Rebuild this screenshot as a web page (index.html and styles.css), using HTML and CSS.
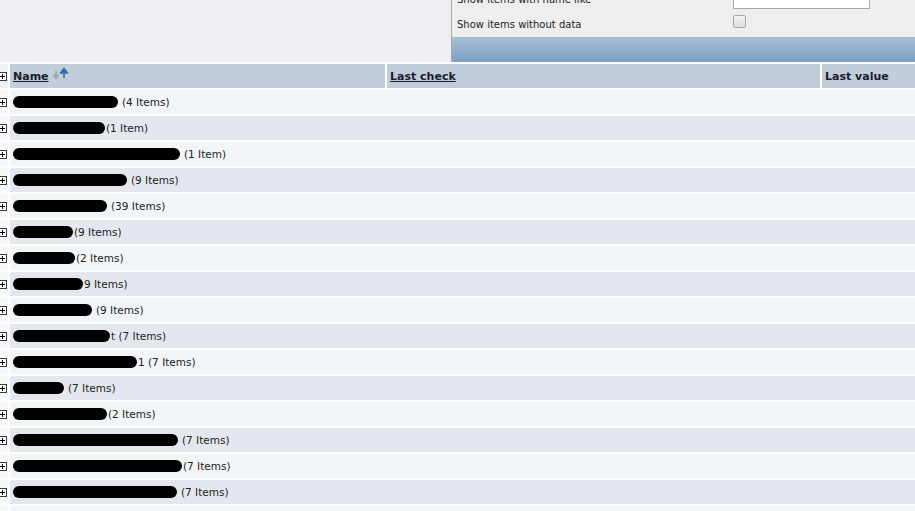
FILE: index.html
```html
<!DOCTYPE html>
<html>
<head>
<meta charset="utf-8">
<link rel="stylesheet" href="styles.css">
</head>
<body>
<div class="top">
  <div class="top-spacer"></div>
  <div class="filter">
    <div class="filter-rows">
      <div class="frow"><span class="flabel">Show items with name like</span><span class="finput"></span></div>
      <div class="frow"><span class="flabel">Show items without data</span><span class="fcheck"></span></div>
    </div>
    <div class="fbar"></div>
  </div>
</div>
<div class="grid">
  <div class="hrow">
    <div class="c0"><span class="plus"></span></div>
    <div class="hcell hname"><a class="hlink">Name</a>
      <svg class="sort" width="18" height="13" viewBox="0 0 18 13"><path d="M4 4 V10 M1.5 7.5 L4 11 L6.5 7.5" stroke="#a8a8a8" stroke-width="2" fill="none"/><path d="M12 11 V4 M8.5 6 L12 1.5 L15.5 6 Z" stroke="#3a6ea5" stroke-width="1.6" fill="#3a6ea5" stroke-linejoin="round"/></svg>
    </div>
    <div class="hcell hcheck"><a class="hlink">Last check</a></div>
    <div class="hcell hvalue">Last value</div>
  </div>
  <div class="row odd"><div class="c0"><span class="plus"></span></div><div class="cell"><span class="blot" style="width:105px"></span><span class="cnt">(4 Items)</span></div></div>
  <div class="row even"><div class="c0"><span class="plus"></span></div><div class="cell"><span class="blot" style="width:92px"></span><span class="cnt tight">(1 Item)</span></div></div>
  <div class="row odd"><div class="c0"><span class="plus"></span></div><div class="cell"><span class="blot" style="width:167px"></span><span class="cnt">(1 Item)</span></div></div>
  <div class="row even"><div class="c0"><span class="plus"></span></div><div class="cell"><span class="blot" style="width:114px"></span><span class="cnt">(9 Items)</span></div></div>
  <div class="row odd"><div class="c0"><span class="plus"></span></div><div class="cell"><span class="blot" style="width:94px"></span><span class="cnt">(39 Items)</span></div></div>
  <div class="row even"><div class="c0"><span class="plus"></span></div><div class="cell"><span class="blot" style="width:60px"></span><span class="cnt tight">(9 Items)</span></div></div>
  <div class="row odd"><div class="c0"><span class="plus"></span></div><div class="cell"><span class="blot" style="width:62px"></span><span class="cnt tight">(2 Items)</span></div></div>
  <div class="row even"><div class="c0"><span class="plus"></span></div><div class="cell"><span class="blot" style="width:70px"></span><span class="cnt tight">9 Items)</span></div></div>
  <div class="row odd"><div class="c0"><span class="plus"></span></div><div class="cell"><span class="blot" style="width:79px"></span><span class="cnt">(9 Items)</span></div></div>
  <div class="row even"><div class="c0"><span class="plus"></span></div><div class="cell"><span class="blot" style="width:97px"></span><span class="cnt tight">t (7 Items)</span></div></div>
  <div class="row odd"><div class="c0"><span class="plus"></span></div><div class="cell"><span class="blot" style="width:124px"></span><span class="cnt tight">1 (7 Items)</span></div></div>
  <div class="row even"><div class="c0"><span class="plus"></span></div><div class="cell"><span class="blot" style="width:51px"></span><span class="cnt">(7 Items)</span></div></div>
  <div class="row odd"><div class="c0"><span class="plus"></span></div><div class="cell"><span class="blot" style="width:94px"></span><span class="cnt tight">(2 Items)</span></div></div>
  <div class="row even"><div class="c0"><span class="plus"></span></div><div class="cell"><span class="blot" style="width:165px"></span><span class="cnt">(7 Items)</span></div></div>
  <div class="row odd"><div class="c0"><span class="plus"></span></div><div class="cell"><span class="blot" style="width:169px"></span><span class="cnt tight">(7 Items)</span></div></div>
  <div class="row even"><div class="c0"><span class="plus"></span></div><div class="cell"><span class="blot" style="width:164px"></span><span class="cnt">(7 Items)</span></div></div>
  <div class="row odd"><div class="c0"><span class="plus"></span></div><div class="cell"></div></div>
</div>
</body>
</html>
```

FILE: styles.css
```css
html, body {
  margin: 0;
  padding: 0;
  background: #ffffff;
  overflow: hidden;
  width: 915px;
  height: 511px;
  font-family: "DejaVu Sans", Verdana, sans-serif;
  color: #1f1f1f;
}

.top {
  display: flex;
  height: 62px;
  background: #eceef1;
  overflow: hidden;
}

.top-spacer {
  width: 451px;
  flex: none;
}

.filter {
  flex: 1;
  display: flex;
  flex-direction: column;
  background: #eeeeee;
  border-left: 1px solid #a9a9a9;
}

.filter-rows {
  margin-top: -13px;
  flex: 1;
  display: flex;
  flex-direction: column;
}

.frow {
  display: flex;
  align-items: center;
  height: 25px;
  padding-left: 5px;
  font-size: 10px;
  color: #222;
}

.flabel {
  width: 276px;
}

.finput {
  width: 137px;
  height: 20px;
  box-sizing: border-box;
  background: #fff;
  border: 1px solid #a6a6a6;
  margin-top: -1px;
}

.fcheck {
  width: 11px;
  height: 11px;
  border: 1px solid #a8a8a8;
  border-radius: 2px;
  background: linear-gradient(#f4f4f4, #dcdcdc);
  margin-top: -6px;
}

.fbar {
  height: 25px;
  flex: none;
  background: linear-gradient(#a9bfd6, #7aa1c6);
}

.grid {
  margin-left: -2px;
  padding-top: 2px;
  display: flex;
  flex-direction: column;
  gap: 2px;
}

.hrow, .row {
  display: flex;
  gap: 2px;
  height: 24px;
}

.c0 {
  width: 10px;
  flex: none;
  display: flex;
  align-items: center;
  background: #f7f8fa;
}

.hrow .c0 {
  background: #eef1f4;
}

.plus {
  position: relative;
  width: 7px;
  height: 7px;
  border: 1px solid #3a3a3a;
  background: #fff;
  box-sizing: content-box;
}

.plus::before, .plus::after {
  content: "";
  position: absolute;
  background: #000;
}

.plus::before {
  left: 1px;
  top: 3px;
  width: 5px;
  height: 1px;
}

.plus::after {
  left: 3px;
  top: 1px;
  width: 1px;
  height: 5px;
}

.hcell {
  background: #c1cdd8;
  display: flex;
  align-items: center;
  padding-left: 3px;
  font-size: 11px;
  font-weight: bold;
  color: #1b1b2f;
  box-sizing: border-box;
}

.hlink {
  color: #1b1b2f;
  text-decoration: underline;
}

.hname {
  width: 375px;
}

.hcheck {
  width: 433px;
}

.hvalue {
  flex: 1;
}

.sort {
  margin-left: 3px;
  margin-top: -5px;
}

.row .cell {
  flex: 1;
  display: flex;
  align-items: center;
  padding-left: 3px;
  font-size: 10.5px;
  color: #222;
}

.odd .cell {
  background: #f2f5f8;
}

.even .cell {
  background: #e4e8ee;
}

.blot {
  display: inline-block;
  height: 12px;
  background: #000;
  border-radius: 6px;
}

.cnt {
  margin-left: 4px;
}

.cnt.tight {
  margin-left: 1px;
}
```
